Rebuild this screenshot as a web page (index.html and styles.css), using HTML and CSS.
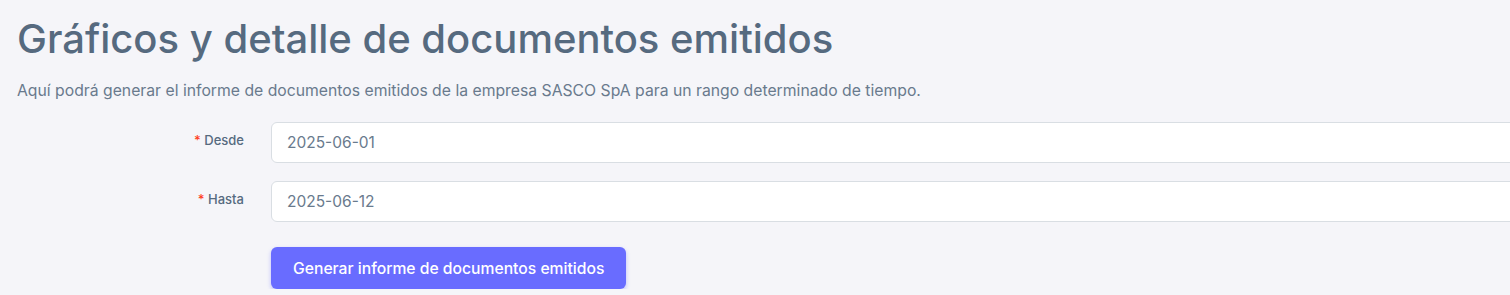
FILE: index.html
```html
<!DOCTYPE html>
<html lang="es">
<head>
<meta charset="utf-8">
<title>Gráficos y detalle de documentos emitidos</title>
<link rel="stylesheet" href="styles.css">
</head>
<body>
<main class="page">
  <h1 class="title">Gráficos y detalle de documentos emitidos</h1>
  <p class="lead">Aquí podrá generar el informe de documentos emitidos de la empresa SASCO SpA para un rango determinado de tiempo.</p>
  <form class="form">
    <div class="row">
      <label class="label" for="desde"><span class="req">*</span> Desde</label>
      <input class="input" id="desde" type="text" value="2025-06-01">
    </div>
    <div class="row">
      <label class="label" for="hasta"><span class="req">*</span> Hasta</label>
      <input class="input" id="hasta" type="text" value="2025-06-12">
    </div>
    <div class="row">
      <span></span>
      <div><button class="btn" type="button">Generar informe de documentos emitidos</button></div>
    </div>
  </form>
</main>
</body>
</html>
```
FILE: styles.css
```css
html, body {
  margin: 0;
  padding: 0;
  background: #f5f5f9;
  overflow: hidden;
}
body {
  font-family: "Inter", "Liberation Sans", sans-serif;
  color: #697a8d;
}
.page {
  padding: 14px 0 0 17px;
  width: 1700px;
}
.title {
  margin: 0;
  font-size: 40px;
  font-weight: 500;
  line-height: 50px;
  color: #566a7f;
}
.lead {
  margin: 16px 0 0;
  font-size: 15.75px;
  line-height: 22px;
  color: #697a8d;
}
.form {
  margin-top: 20px;
  display: flex;
  flex-direction: column;
  gap: 18px;
}
.row {
  display: grid;
  grid-template-columns: 238px 1fr;
  gap: 16px;
  align-items: start;
}
.label {
  text-align: right;
  padding-right: 11px;
  padding-top: 10px;
  font-size: 13px;
  font-weight: 500;
  color: #566a7f;
}
.req {
  color: #ff3e1d;
}
.input {
  box-sizing: border-box;
  width: 100%;
  height: 41px;
  padding: 0 15px;
  border: 1px solid #d9dee3;
  border-radius: 6px;
  background: #fff;
  font-family: "Inter", "Liberation Sans", sans-serif;
  font-size: 15.5px;
  color: #697a8d;
}
.btn {
  margin-top: 7px;
  height: 42px;
  padding: 0 22px;
  border: 0;
  border-radius: 6px;
  background: #696cff;
  color: #fff;
  font-family: "Inter", "Liberation Sans", sans-serif;
  font-size: 15.7px;
  font-weight: 500;
  box-shadow: 0 2px 4px 0 rgba(105, 108, 255, 0.4);
}
```
